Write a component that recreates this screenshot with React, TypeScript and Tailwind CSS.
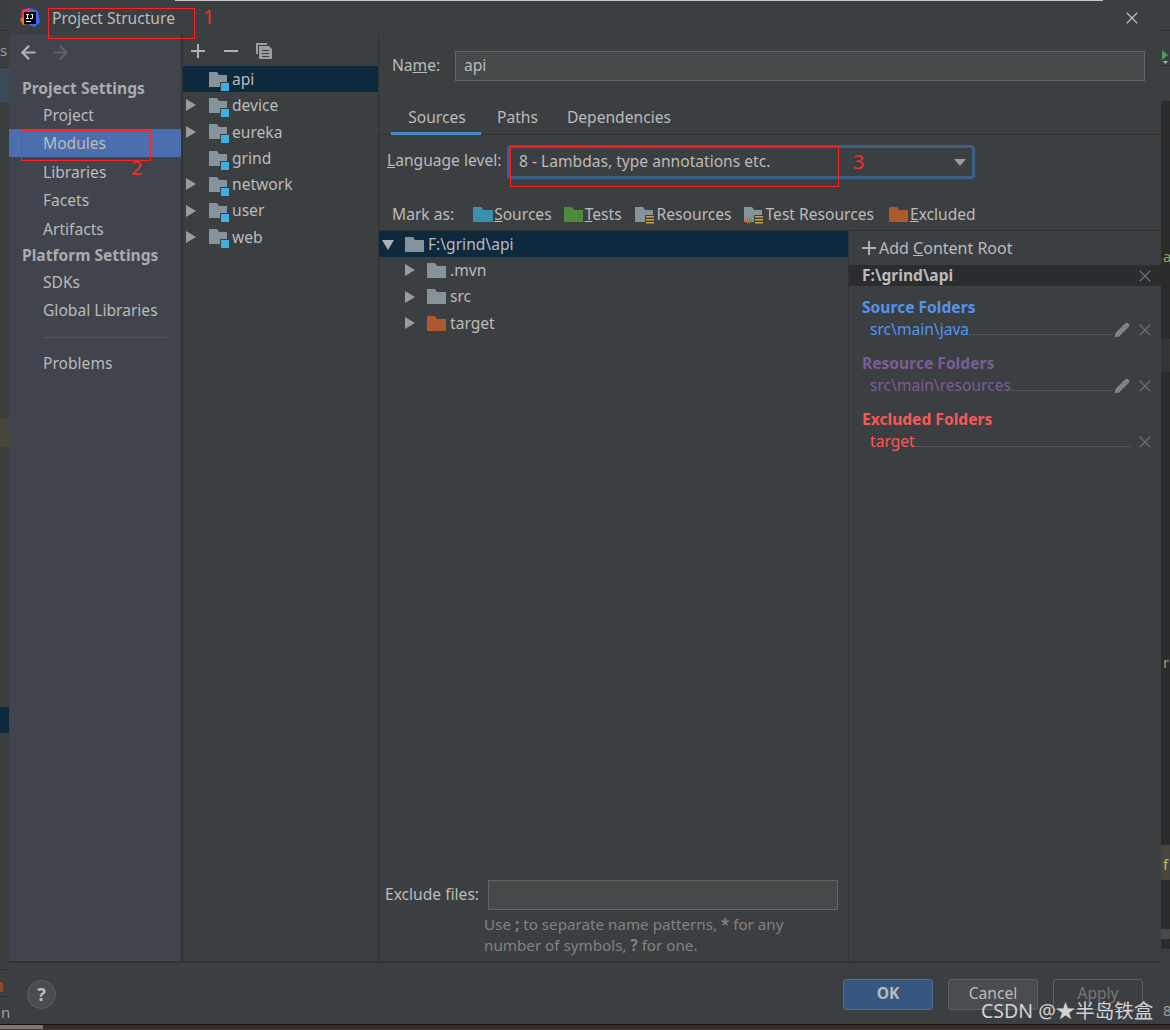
import { ArrowLeft, ArrowRight, Pencil, X } from "lucide-react"

const font = "font-['Noto_Sans','Noto_Sans_CJK_SC',sans-serif]"

function PlusIcon({ size = 14 }: { size?: number }) {
  return (
    <svg width={size} height={size} viewBox="0 0 14 14" className="shrink-0">
      <path d="M6 0h2v6h6v2H8v6H6V8H0V6h6z" fill="#afb1b3" />
    </svg>
  )
}

function CopyIcon() {
  return (
    <svg width="16" height="16" viewBox="0 0 16 16" className="shrink-0">
      <path d="M0 0h11v2H2v9H0z" fill="#9a9c9e" />
      <path d="M3 3h10l3 3v10H3z" fill="#9a9c9e" />
      <path d="M6 7h7v1H6zM6 10h7v1H6zM6 13h7v1H6z" fill="#3c3f41" />
    </svg>
  )
}

function Folder({ color = "#87939a" }: { color?: string }) {
  return (
    <svg width="19" height="15" viewBox="0 0 19 15" className="shrink-0">
      <path d="M0 0h8l2 3h9v12H0z" fill={color} />
    </svg>
  )
}

function ModuleFolder() {
  return (
    <svg width="20" height="19" viewBox="0 0 20 19" className="shrink-0">
      <path d="M0 0h8l2 3h8v12H0z" fill="#87939a" />
      <rect x="11" y="10" width="9" height="9" fill="#3c3f41" />
      <rect x="12" y="11" width="8" height="8" fill="#3eb0e0" />
    </svg>
  )
}

function Caret({ open = false }: { open?: boolean }) {
  return (
    <svg width="12" height="12" viewBox="0 0 12 12" className="shrink-0">
      {open ? <path d="M0 1h12L6 11z" fill="#afb1b3" /> : <path d="M1 0l10 6-10 6z" fill="#9a9c9e" />}
    </svg>
  )
}

function Resources({ test = false }: { test?: boolean }) {
  return (
    <svg width="20" height="18" viewBox="0 0 20 18" className="shrink-0">
      <path d="M0 1h8l2 3h8v12H0z" fill="#87939a" />
      <rect x="10" y="9" width="10" height="9" fill="#3c3f41" />
      <path d="M11 10h8v1.5h-8zM11 13h8v1.5h-8zM11 16h8v1.5h-8z" fill="#c9a13f" />
      {test && <path d="M4 11L0 14.5 4 18z" fill="#e3641f" />}
      {test && <path d="M5 11l4 3.5L5 18z" fill="#5aa02c" />}
    </svg>
  )
}

const settings = [
  { label: "Project", cls: "" },
  { label: "Modules", cls: "bg-[#4b6eaf]" },
  { label: "Libraries", cls: "mt-px" },
  { label: "Facets", cls: "" },
  { label: "Artifacts", cls: "mt-px" },
]

const modules = [
  { name: "api", caret: false, selected: true },
  { name: "device", caret: true },
  { name: "eureka", caret: true },
  { name: "grind", caret: false },
  { name: "network", caret: true },
  { name: "user", caret: true },
  { name: "web", caret: true },
]

function FolderEntry({
  title,
  path,
  color,
  edit = true,
}: {
  title: string
  path: string
  color: string
  edit?: boolean
}) {
  return (
    <div className="h-[56px] pl-[13px] pr-[6px]">
      <div className={`h-[22px] leading-[22px] font-bold ${color}`}>{title}</div>
      <div className="flex h-[22px] items-center pl-[8px] pt-px">
        <span className={color}>{path}</span>
        <span className="mt-[10px] flex-1 border-b border-dotted border-[#6b6e70]" />
        {edit && <Pencil size={16} className="ml-[3px] text-[#7f8284]" fill="#7f8284" />}
        <X size={20} strokeWidth={1.3} className="ml-[5px] text-[#6f7274]" />
      </div>
    </div>
  )
}

export default function App() {
  return (
    <div className={`${font} relative flex h-[1030px] w-[1170px] flex-col overflow-hidden bg-[#3c3f41] text-[15.6px] text-[#bbbbbb]`}>
      <div className="flex h-[1025px] border-b border-[#141414]">
        {/* ide behind the dialog */}
        <div className="flex w-[9px] flex-col overflow-hidden bg-[#3b3d3f]">
          <div className="h-[31px] border-b border-[#323232]" />
          <div className="h-[37px] border-b border-[#323232]" />
          <div className="h-[34px] bg-[#3c4a57]" />
          <div className="h-[316px]" />
          <div className="h-[29px] bg-[#4a453c]" />
          <div className="h-[260px]" />
          <div className="h-[26px] bg-[#0d293e]" />
          <div className="h-[237px] border-b border-[#323232]" />
          <div className="h-[27px] border-b border-[#323232] pt-[12px]">
            <div className="h-[10px] w-[3px] bg-[#8a4b2a]" />
          </div>
        </div>

        <div className="flex h-[1021px] w-[1152px] flex-col bg-[#3c3f41]">
          <div className="flex h-[35px] items-center">
            <svg width="20" height="20" viewBox="0 0 20 20" className="ml-[11px] shrink-0">
              <path d="M2 2l7-2 4 3-8 14-4-5z" fill="#fe315d" />
              <path d="M10 0l8 3 2 11-5 5-6-2z" fill="#3b6cf0" />
              <path d="M0 11l4-2 2 7-3 1z" fill="#f97a12" />
              <rect x="4" y="4" width="12" height="12" fill="#000" />
              <path d="M6 6h3v1H8v3h1v1H6v-1h1V7H6zM11 6h2v4q0 1-1 1h-2v-1h2V7h-1zM6 13h5v1H6z" fill="#fff" />
            </svg>
            <span className="ml-[12px] pt-[2px]">Project Structure</span>
            <X size={20} strokeWidth={1.3} className="ml-auto mr-[19px] mt-px text-[#c4c6c7]" />
          </div>

          <div className="flex flex-1 border-b-[2px] border-[#323232]">
            {/* sidebar */}
            <div className="flex w-[172px] flex-col bg-[#3f444d]">
              <div className="flex h-[38px] items-center gap-[11px] pb-[4px] pl-[9px]">
                <ArrowLeft size={21} strokeWidth={2.5} className="text-[#afb1b3]" />
                <ArrowRight size={21} strokeWidth={2.5} className="text-[#5f6265]" />
              </div>
              <div className="h-[28px] pl-[13px] leading-[30px] font-bold text-[#a9abad]">Project Settings</div>
              {settings.map((item) => (
                <div key={item.label} className={`h-[28px] pl-[34px] leading-[28px] ${item.cls}`}>
                  {item.label}
                </div>
              ))}
              <div className="-mt-[2px] h-[28px] pl-[13px] leading-[28px] font-bold text-[#a9abad]">Platform Settings</div>
              <div className="h-[28px] pl-[34px] leading-[26px]">SDKs</div>
              <div className="h-[28px] pl-[34px] leading-[26px]">Global Libraries</div>
              <div className="ml-[34px] mr-[14px] mt-[12px] border-t border-[#51555c]" />
              <div className="mt-[12px] h-[28px] pl-[34px] leading-[26px]">Problems</div>
            </div>

            {/* module list */}
            <div className="flex w-[198px] flex-col border-l-2 border-r border-[#323232]">
              <div className="flex h-[31px] items-center pl-[8px]">
                <PlusIcon />
                <span className="ml-[19px] h-[2px] w-[14px] bg-[#afb1b3]" />
                <span className="ml-[18px]"><CopyIcon /></span>
              </div>
              {modules.map((m) => (
                <div key={m.name} className={`flex h-[26.3px] items-center ${m.selected ? "bg-[#0d293e]" : ""}`}>
                  <div className="flex w-[26px] pl-[2px]">{m.caret && <Caret />}</div>
                  <div className="pt-[4px]"><ModuleFolder /></div>
                  <span className="ml-[3px] pt-px">{m.name}</span>
                </div>
              ))}
            </div>

            {/* module editor */}
            <div className="flex flex-1 flex-col">
              <div className="flex h-[65px] items-start pl-[13px] pr-[16px] pt-[16px]">
                <span className="w-[63px] leading-[28px]">
                  Na<span className="underline">m</span>e:
                </span>
                <div className="h-[30px] flex-1 border border-[#646464] bg-[#45494a] pl-[8px] leading-[27px]">api</div>
              </div>
              <div className="flex h-[35px] items-start border-b border-[#323232] pl-[12px]">
                <div className="flex h-[35px] w-[90px] justify-center border-b-[3px] border-[#4a88c7] pl-[2px] pt-[6px]">Sources</div>
                <div className="ml-[16px] pt-[6px]">Paths</div>
                <div className="ml-[29px] pt-[6px]">Dependencies</div>
              </div>
              <div className="flex h-[57px] items-center pb-[4px] pl-[8px]">
                <span className="w-[121px] pb-[2px]">
                  <span className="underline">L</span>anguage level:
                </span>
                <div className="flex h-[32px] w-[466px] items-center justify-between rounded-[3px] border-2 border-[#3d6185] bg-[#3c3f41] pl-[9px] pr-[6px] pt-px ring-1 ring-[#3d6185]">
                  <span>8 - Lambdas, type annotations etc.</span>
                  <svg width="12" height="7" viewBox="0 0 12 7">
                    <path d="M0 0h12L6 7z" fill="#9a9c9e" />
                  </svg>
                </div>
              </div>
              <div className="flex h-[39px] items-center border-b border-[#323232] pl-[13px] pt-[7px]">
                <span className="mr-[19px]">Mark as:</span>
                <svg width="20" height="15" viewBox="0 0 20 15" className="mr-px">
                  <path d="M0 0h8l2 3h10v12H0z" fill="#3d8fae" />
                </svg>
                <span><span className="underline">S</span>ources</span>
                <svg width="19" height="15" viewBox="0 0 19 15" className="ml-[12px] mr-[2px]">
                  <path d="M0 0h8l2 3h9v12H0z" fill="#4e8a3d" />
                </svg>
                <span><span className="underline">T</span>ests</span>
                <div className="ml-[13px] mr-[2px]"><Resources /></div>
                <span>Resources</span>
                <div className="ml-[12px] mr-[2px]"><Resources test /></div>
                <span>Test Resources</span>
                <svg width="19" height="15" viewBox="0 0 19 15" className="ml-[15px] mr-[2px]">
                  <path d="M0 0h8l2 3h9v12H0z" fill="#ab5a2e" />
                </svg>
                <span><span className="underline">E</span>xcluded</span>
              </div>

              <div className="flex flex-1">
                <div className="flex w-[470px] flex-col border-r border-[#323232]">
                  <div className="flex h-[26px] items-center bg-[#0d293e] pl-[3px] pt-px">
                    <Caret open />
                    <span className="ml-[11px]"><Folder /></span>
                    <span className="ml-[4px]">F:\grind\api</span>
                  </div>
                  {[
                    { name: ".mvn", color: "#87939a" },
                    { name: "src", color: "#87939a" },
                    { name: "target", color: "#ab5a2e" },
                  ].map((f) => (
                    <div key={f.name} className="flex h-[26.5px] items-center pl-[25px]">
                      <Caret />
                      <span className="ml-[11px]"><Folder color={f.color} /></span>
                      <span className="ml-[4px]">{f.name}</span>
                    </div>
                  ))}
                  <div className="mt-auto flex items-center pl-[6px]">
                    <span className="w-[103px]">Exclude files:</span>
                    <div className="h-[30px] w-[350px] border border-[#646464] bg-[#45494a]" />
                  </div>
                  <div className="mb-[5px] mt-[4px] pl-[105px] text-[15.2px] leading-[21px] text-[#808284]">
                    Use <b>;</b> to separate name patterns, <b>*</b> for any
                    <br />
                    number of symbols, <b>?</b> for one.
                  </div>
                </div>

                <div className="flex flex-1 flex-col">
                  <div className="flex h-[34px] items-center pb-px pl-[13px]">
                    <span className="mr-[3px]"><PlusIcon /></span>
                    <span className="text-[16px]">Add <span className="underline">C</span>ontent Root</span>
                  </div>
                  <div className="flex h-[21px] items-center justify-between bg-[#2b2c2e] pl-[13px] pr-[6px]">
                    <span className="font-bold">F:\grind\api</span>
                    <X size={20} strokeWidth={1.3} className="text-[#6f7274]" />
                  </div>
                  <div className="h-[10px]" />
                  <FolderEntry title="Source Folders" path="src\main\java" color="text-[#5394ec]" />
                  <FolderEntry title="Resource Folders" path="src\main\resources" color="text-[#7a5c9a]" />
                  <FolderEntry title="Excluded Folders" path="target" color="text-[#fa5858]" edit={false} />
                </div>
              </div>
            </div>
          </div>

          <div className="flex h-[58px] items-center px-[18px] pt-[4px]">
            <div className="flex h-[29px] w-[29px] items-center justify-center rounded-full border border-[#5e6060] bg-[#4a4d4f] text-[18px] font-bold">?</div>
            <div className="ml-auto flex h-[31px] w-[90px] items-center justify-center rounded-[3px] border border-[#4c708c] bg-[#365880] font-bold">OK</div>
            <div className="ml-[15px] flex h-[31px] w-[90px] items-center justify-center rounded-[3px] border border-[#5e6060] bg-[#4a4d4f]">Cancel</div>
            <div className="ml-[15px] flex h-[31px] w-[90px] items-center justify-center rounded-[3px] border border-[#5e6060] text-[#777777]">Apply</div>
          </div>
        </div>

        <div className="flex w-[9px] flex-col bg-[#3c3f41]">
          <div className="h-[31px] border-b border-[#323232]" />
          <div className="h-[35px] border-b border-[#323232]" />
          <div className="h-[35px]" />
          <div className="h-[238px] bg-[#2b2b2b]" />
          <div className="h-[33px] bg-[#333537]" />
          <div className="h-[473px] bg-[#2b2b2b]" />
          <div className="h-[35px] bg-[#4a453c]" />
          <div className="h-[49px] bg-[#2b2b2b]" />
          <div className="h-[10px] bg-[#46484a]" />
          <div className="h-[10px] bg-[#2b2b2b]" />
          <div className="flex-1" />
        </div>
      </div>
      <div className="flex h-[4px]">
        <div className="w-[43px] bg-[#85736b]" />
        <div className="flex-1 bg-[#3f2a27]" />
      </div>

      {/* window edge, run icon and annotations drawn on top */}
      <div className="absolute left-[175px] top-0 h-px w-[928px] bg-[#c8c8c8]" />
      <svg width="7" height="14" viewBox="0 0 7 14" className="absolute left-[1162px] top-[50px]">
        <path d="M0 0l6 5-6 5z" fill="#499c54" />
        <path d="M1 11h5l-2.500 3z" fill="#afb1b3" />
      </svg>
      <div className="absolute left-[48px] top-[8px] h-[31px] w-[147px] border border-[#ff2020]" />
      <div className="absolute left-[21px] top-[130px] h-[31px] w-[130px] border border-[#ff2020]" />
      <div className="absolute left-[510px] top-[146px] h-[41px] w-[329px] border border-[#ff2020]" />
      <span className="absolute left-[203px] top-[5px] text-[20px] leading-[24px] text-[#f03030]">1</span>
      <span className="absolute left-[131px] top-[156px] text-[20px] leading-[24px] text-[#f03030]">2</span>
      <span className="absolute left-[853px] top-[150px] text-[20px] leading-[24px] text-[#f03030]">3</span>
      <span className="absolute left-[1163px] top-[246px] text-[15px] leading-[20px] text-[#8fa55f]">a</span>
      <span className="absolute left-[1163px] top-[652px] text-[15px] leading-[20px] text-[#8fa55f]">r</span>
      <span className="absolute left-[1163px] top-[854px] text-[15px] leading-[20px] text-[#c4b26a]">f</span>
      <span className="absolute left-[1163px] top-[1000px] text-[15px] leading-[20px] text-[#9a9c9e]">8</span>
      <span className="absolute left-[0px] top-[40px] text-[15px] leading-[20px] text-[#9a9c9e]">s</span>
      <span className="absolute left-[1px] top-[1002px] text-[15px] leading-[20px] text-[#9a9c9e]">n</span>
      <span className="absolute left-[981px] top-[997px] text-[19.5px] leading-[28px] text-[#d0d2d3]">CSDN @★半岛铁盒</span>
    </div>
  )
}
